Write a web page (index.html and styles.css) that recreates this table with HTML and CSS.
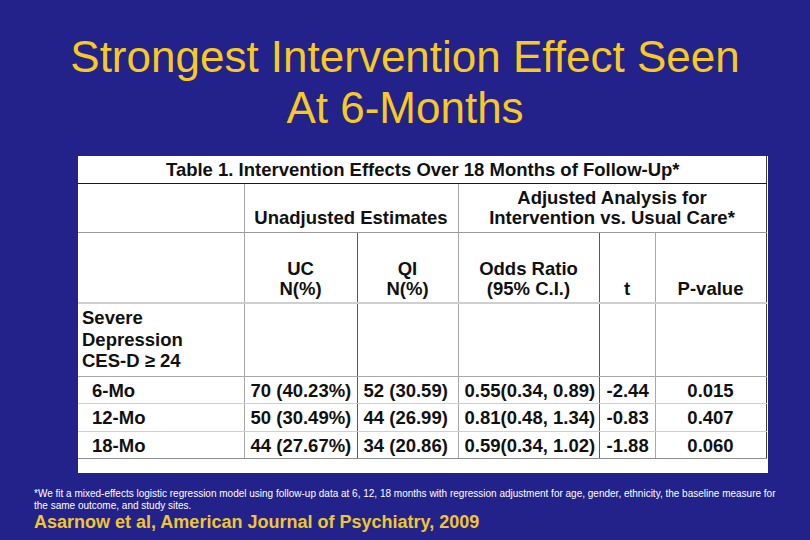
FILE: index.html
```html
<!DOCTYPE html>
<html lang="en">
<head>
<meta charset="utf-8">
<title>Strongest Intervention Effect Seen At 6-Months</title>
<link rel="stylesheet" href="styles.css">
</head>
<body>
<div class="slide">
  <h1 class="slide-title">Strongest Intervention Effect Seen<br>At 6-Months</h1>
  <div class="table-card">
    <table class="results">
      <colgroup>
        <col class="c-label"><col class="c-uc"><col class="c-qi"><col class="c-or"><col class="c-t"><col class="c-p">
      </colgroup>
      <tr class="row-title">
        <td colspan="6" class="cell-title">Table 1. Intervention Effects Over 18 Months of Follow-Up*</td>
      </tr>
      <tr class="row-group">
        <td class="b-light"></td>
        <td colspan="2" class="head b-light">Unadjusted Estimates</td>
        <td colspan="3" class="head b-edge">Adjusted Analysis for<br>Intervention vs. Usual Care*</td>
      </tr>
      <tr class="row-head">
        <td class="b-light"></td>
        <td class="head b-dark">UC<br>N(%)</td>
        <td class="head b-light">QI<br>N(%)</td>
        <td class="head b-dark">Odds Ratio<br>(95% C.I.)</td>
        <td class="head b-light">t</td>
        <td class="head b-edge">P-value</td>
      </tr>
      <tr class="row-measure">
        <td class="measure b-light">Severe<br>Depression<br>CES-D ≥ 24</td>
        <td class="b-dark"></td>
        <td class="b-light"></td>
        <td class="b-dark"></td>
        <td class="b-light"></td>
        <td class="b-edge"></td>
      </tr>
      <tr class="row-data">
        <td class="period b-light">6-Mo</td>
        <td class="val b-dark">70 (40.23%)</td>
        <td class="val b-light">52 (30.59)</td>
        <td class="val b-dark">0.55(0.34, 0.89)</td>
        <td class="val val-t b-light">-2.44</td>
        <td class="val val-p b-edge">0.015</td>
      </tr>
      <tr class="row-data row-mid">
        <td class="period b-light">12-Mo</td>
        <td class="val b-dark">50 (30.49%)</td>
        <td class="val b-light">44 (26.99)</td>
        <td class="val b-dark">0.81(0.48, 1.34)</td>
        <td class="val val-t b-light">-0.83</td>
        <td class="val val-p b-edge">0.407</td>
      </tr>
      <tr class="row-data row-last">
        <td class="period b-light">18-Mo</td>
        <td class="val b-dark">44 (27.67%)</td>
        <td class="val b-light">34 (20.86)</td>
        <td class="val b-dark">0.59(0.34, 1.02)</td>
        <td class="val val-t b-light">-1.88</td>
        <td class="val val-p b-edge">0.060</td>
      </tr>
    </table>
  </div>
  <p class="footnote">*We fit a mixed-effects logistic regression model using follow-up data at 6, 12, 18 months with regression adjustment for age, gender, ethnicity, the baseline measure for<br>the same outcome, and study sites.</p>
  <p class="citation">Asarnow et al, American Journal of Psychiatry, 2009</p>
</div>
</body>
</html>
```

FILE: styles.css
```css
html, body {
  margin: 0;
  padding: 0;
}

body {
  background: #22228a;
  font-family: "Liberation Sans", Arial, sans-serif;
}

.slide {
  width: 810px;
  height: 540px;
  overflow: hidden;
  display: flex;
  flex-direction: column;
}

.slide-title {
  margin: 31px 0 0 0;
  font-weight: normal;
  font-size: 44px;
  line-height: 51px;
  color: #f6c925;
  text-align: center;
}

.table-card {
  margin: 23px 0 0 78px;
  width: 688px;
  padding: 0 2px 14px 0;
  background: #ffffff;
}

.results {
  width: 688px;
  table-layout: fixed;
  border-collapse: collapse;
  font-weight: bold;
  font-size: 18.5px;
  line-height: 20px;
  color: #111;
}

.c-label { width: 166px; }
.c-uc { width: 113px; }
.c-qi { width: 101px; }
.c-or { width: 141px; }
.c-t { width: 56px; }
.c-p { width: 111px; }

.results td {
  padding: 0;
  white-space: nowrap;
}

.b-light { border-right: 1px solid #a8a8a8; }
.b-dark { border-right: 1px solid #5a5a5a; }
.b-edge { border-right: 1px solid #3c3c3c; }

.row-title td {
  height: 27px;
  border-bottom: 1px solid #1a1a1a;
  border-right: 1px solid #3c3c3c;
  text-align: center;
  vertical-align: middle;
  line-height: 21px;
  padding-left: 2px;
}

.row-group td {
  height: 44px;
  vertical-align: bottom;
  padding-bottom: 4px;
  border-bottom: 1px solid #9a9a9a;
}

.row-head td {
  height: 66px;
  vertical-align: bottom;
  padding-bottom: 3px;
  border-bottom: 2px solid #cfcfcf;
}

.head {
  text-align: center;
}

.row-measure td {
  height: 69px;
  vertical-align: top;
  padding-top: 3px;
  border-bottom: 1px solid #a8a8a8;
}

.measure {
  padding-left: 4px !important;
  line-height: 21.5px;
}

.row-data td {
  height: 26px;
  vertical-align: middle;
  border-bottom: 1px solid #cfcfcf;
  line-height: 21px;
}

.row-mid td {
  height: 27px;
}

.row-last td {
  border-bottom: 1px solid #8c8c8c;
}

.period {
  padding-left: 14px !important;
}

.val {
  padding-left: 6px !important;
}

.val-t {
  padding-left: 7px !important;
}

.val-p {
  padding-left: 0 !important;
  text-align: center;
}

.footnote {
  margin: 15px 0 0 34px;
  font-size: 10px;
  line-height: 12px;
  color: #ffffff;
  white-space: nowrap;
}

.citation {
  margin: 0 0 0 34px;
  font-weight: bold;
  font-size: 18px;
  line-height: normal;
  color: #eec534;
  white-space: nowrap;
}
```
